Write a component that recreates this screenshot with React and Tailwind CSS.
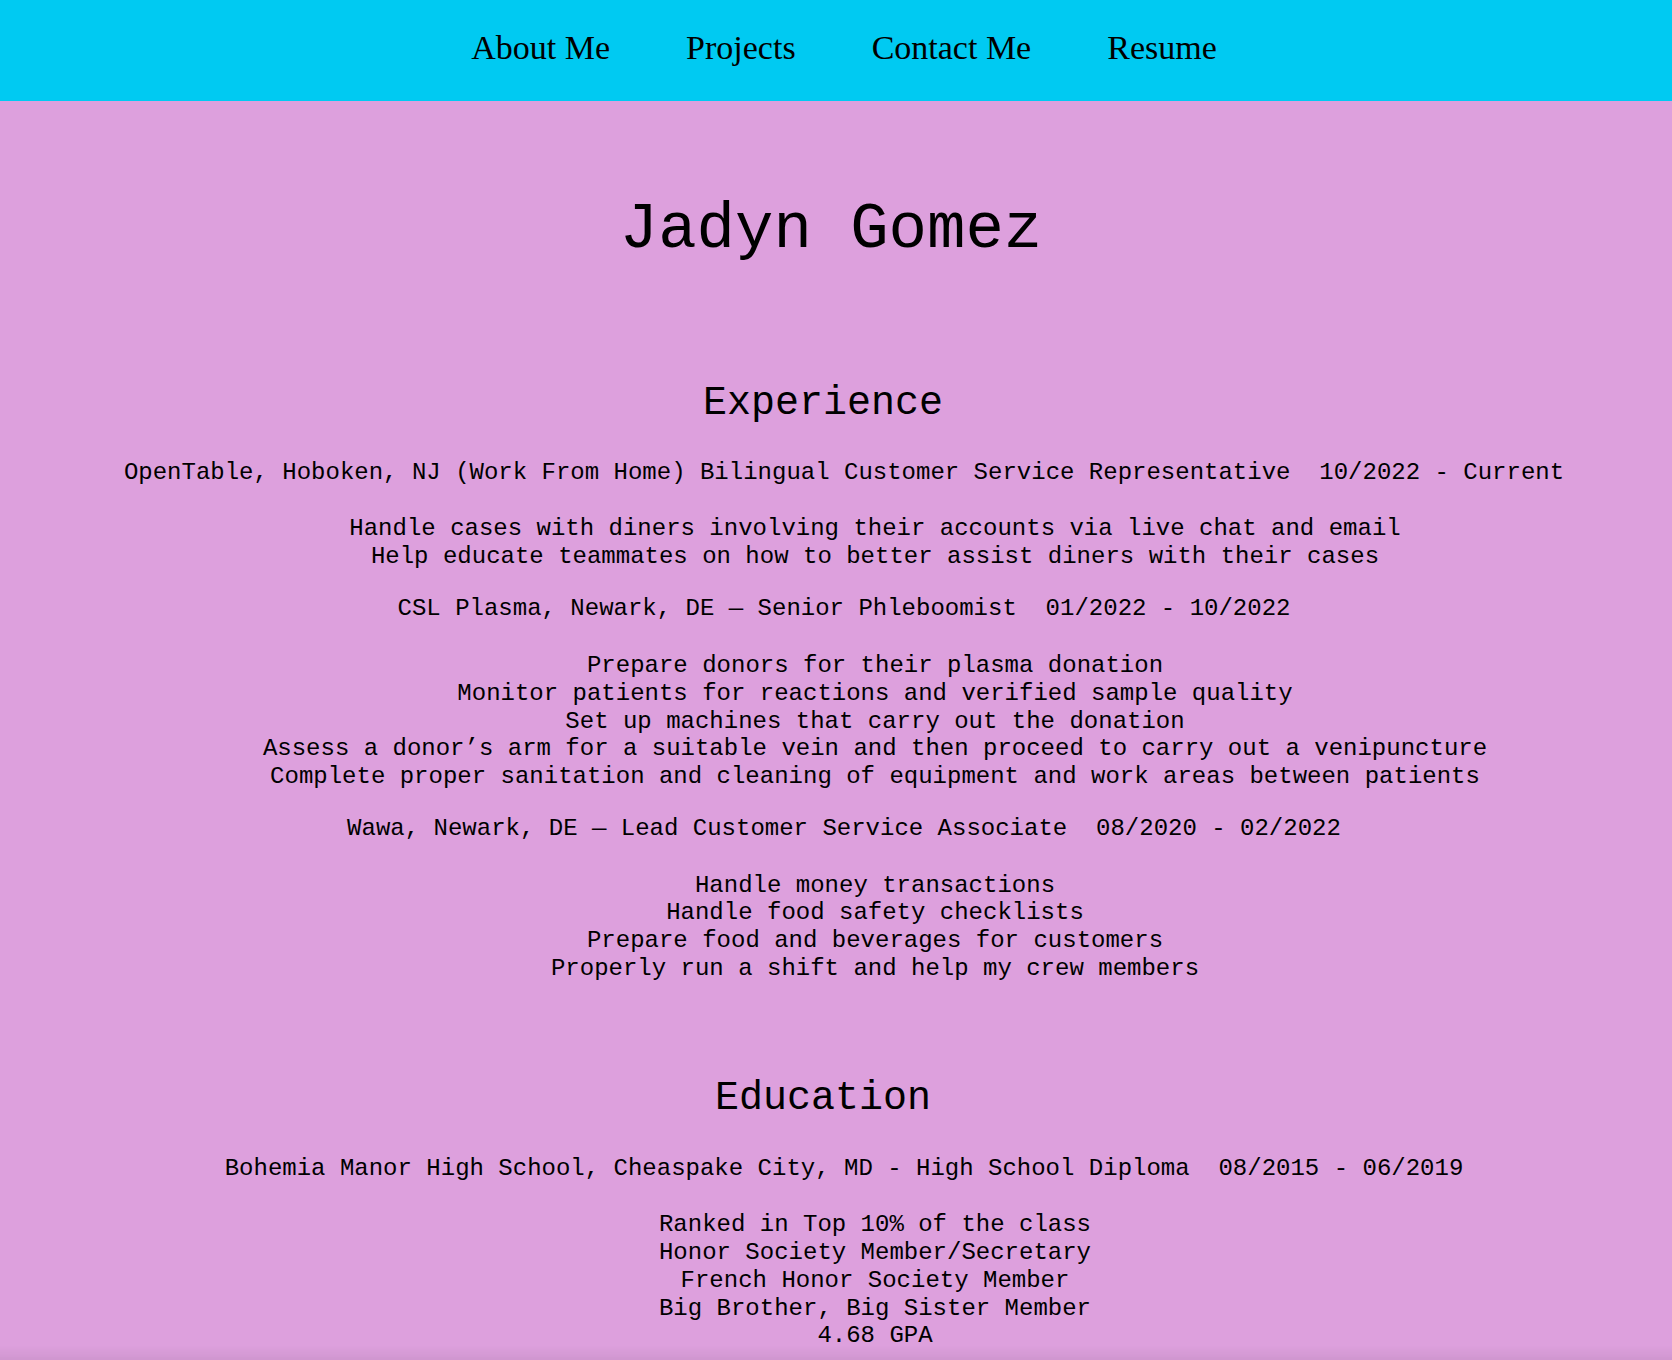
const jobs = [
  {
    line: 'OpenTable, Hoboken, NJ (Work From Home) Bilingual Customer Service Representative  10/2022 - Current',
    gap: 'mt-[33px]',
    listGap: 'mt-[28px]',
    items: [
      'Handle cases with diners involving their accounts via live chat and email',
      'Help educate teammates on how to better assist diners with their cases',
    ],
  },
  {
    line: 'CSL Plasma, Newark, DE — Senior Phleboomist  01/2022 - 10/2022',
    gap: 'mt-[25px]',
    listGap: 'mt-[29px]',
    items: [
      'Prepare donors for their plasma donation',
      'Monitor patients for reactions and verified sample quality',
      'Set up machines that carry out the donation',
      'Assess a donor’s arm for a suitable vein and then proceed to carry out a venipuncture',
      'Complete proper sanitation and cleaning of equipment and work areas between patients',
    ],
  },
  {
    line: 'Wawa, Newark, DE — Lead Customer Service Associate  08/2020 - 02/2022',
    gap: 'mt-[24px]',
    listGap: 'mt-[29px]',
    items: [
      'Handle money transactions',
      'Handle food safety checklists',
      'Prepare food and beverages for customers',
      'Properly run a shift and help my crew members',
    ],
  },
]

const school = {
  line: 'Bohemia Manor High School, Cheaspake City, MD - High School Diploma  08/2015 - 06/2019',
  gap: 'mt-[34px]',
  listGap: 'mt-[29px]',
  items: [
    'Ranked in Top 10% of the class',
    'Honor Society Member/Secretary',
    'French Honor Society Member',
    'Big Brother, Big Sister Member',
    '4.68 GPA',
  ],
}

function Entry({ line, items, gap, listGap }) {
  return (
    <div className={gap}>
      <p className="whitespace-pre pl-[16px] text-center text-[24px] leading-[27.75px]">{line}</p>
      <ul className={`${listGap} pl-[78px]`}>
        {items.map((item) => (
          <li key={item} className="text-center text-[24px] leading-[27.75px]">
            {item}
          </li>
        ))}
      </ul>
    </div>
  )
}

export default function App() {
  return (
    <div
      className="min-h-screen bg-[#dda0dd] text-black"
      style={{ fontFamily: '"Liberation Mono", "Courier New", monospace' }}
    >
      {/* Nav */}
      <nav className="flex h-[101px] items-center justify-center gap-[76px] bg-[#00caf2] pl-[16px] pb-[6px] font-['Liberation_Serif',serif] text-[34px]">
        <a href="#about">About Me</a>
        <a href="#projects">Projects</a>
        <a href="#contact">Contact Me</a>
        <a href="#resume">Resume</a>
      </nav>

      <h1 className="mt-[93px] pr-[10px] text-center text-[64px] leading-[72px]">Jadyn Gomez</h1>

      {/* Experience */}
      <section className="mt-[115px]">
        <h2 className="pr-[26px] text-center text-[40px] leading-[45px]">Experience</h2>
        {jobs.map((job) => (
          <Entry key={job.line} {...job} />
        ))}
      </section>

      {/* Education */}
      <section className="mt-[93px] pb-[60px]">
        <h2 className="pr-[26px] text-center text-[40px] leading-[45px]">Education</h2>
        <Entry {...school} />
      </section>

      <div className="pointer-events-none fixed inset-x-0 bottom-0 h-[14px] bg-gradient-to-b from-transparent to-black/[0.06]" />
    </div>
  )
}
